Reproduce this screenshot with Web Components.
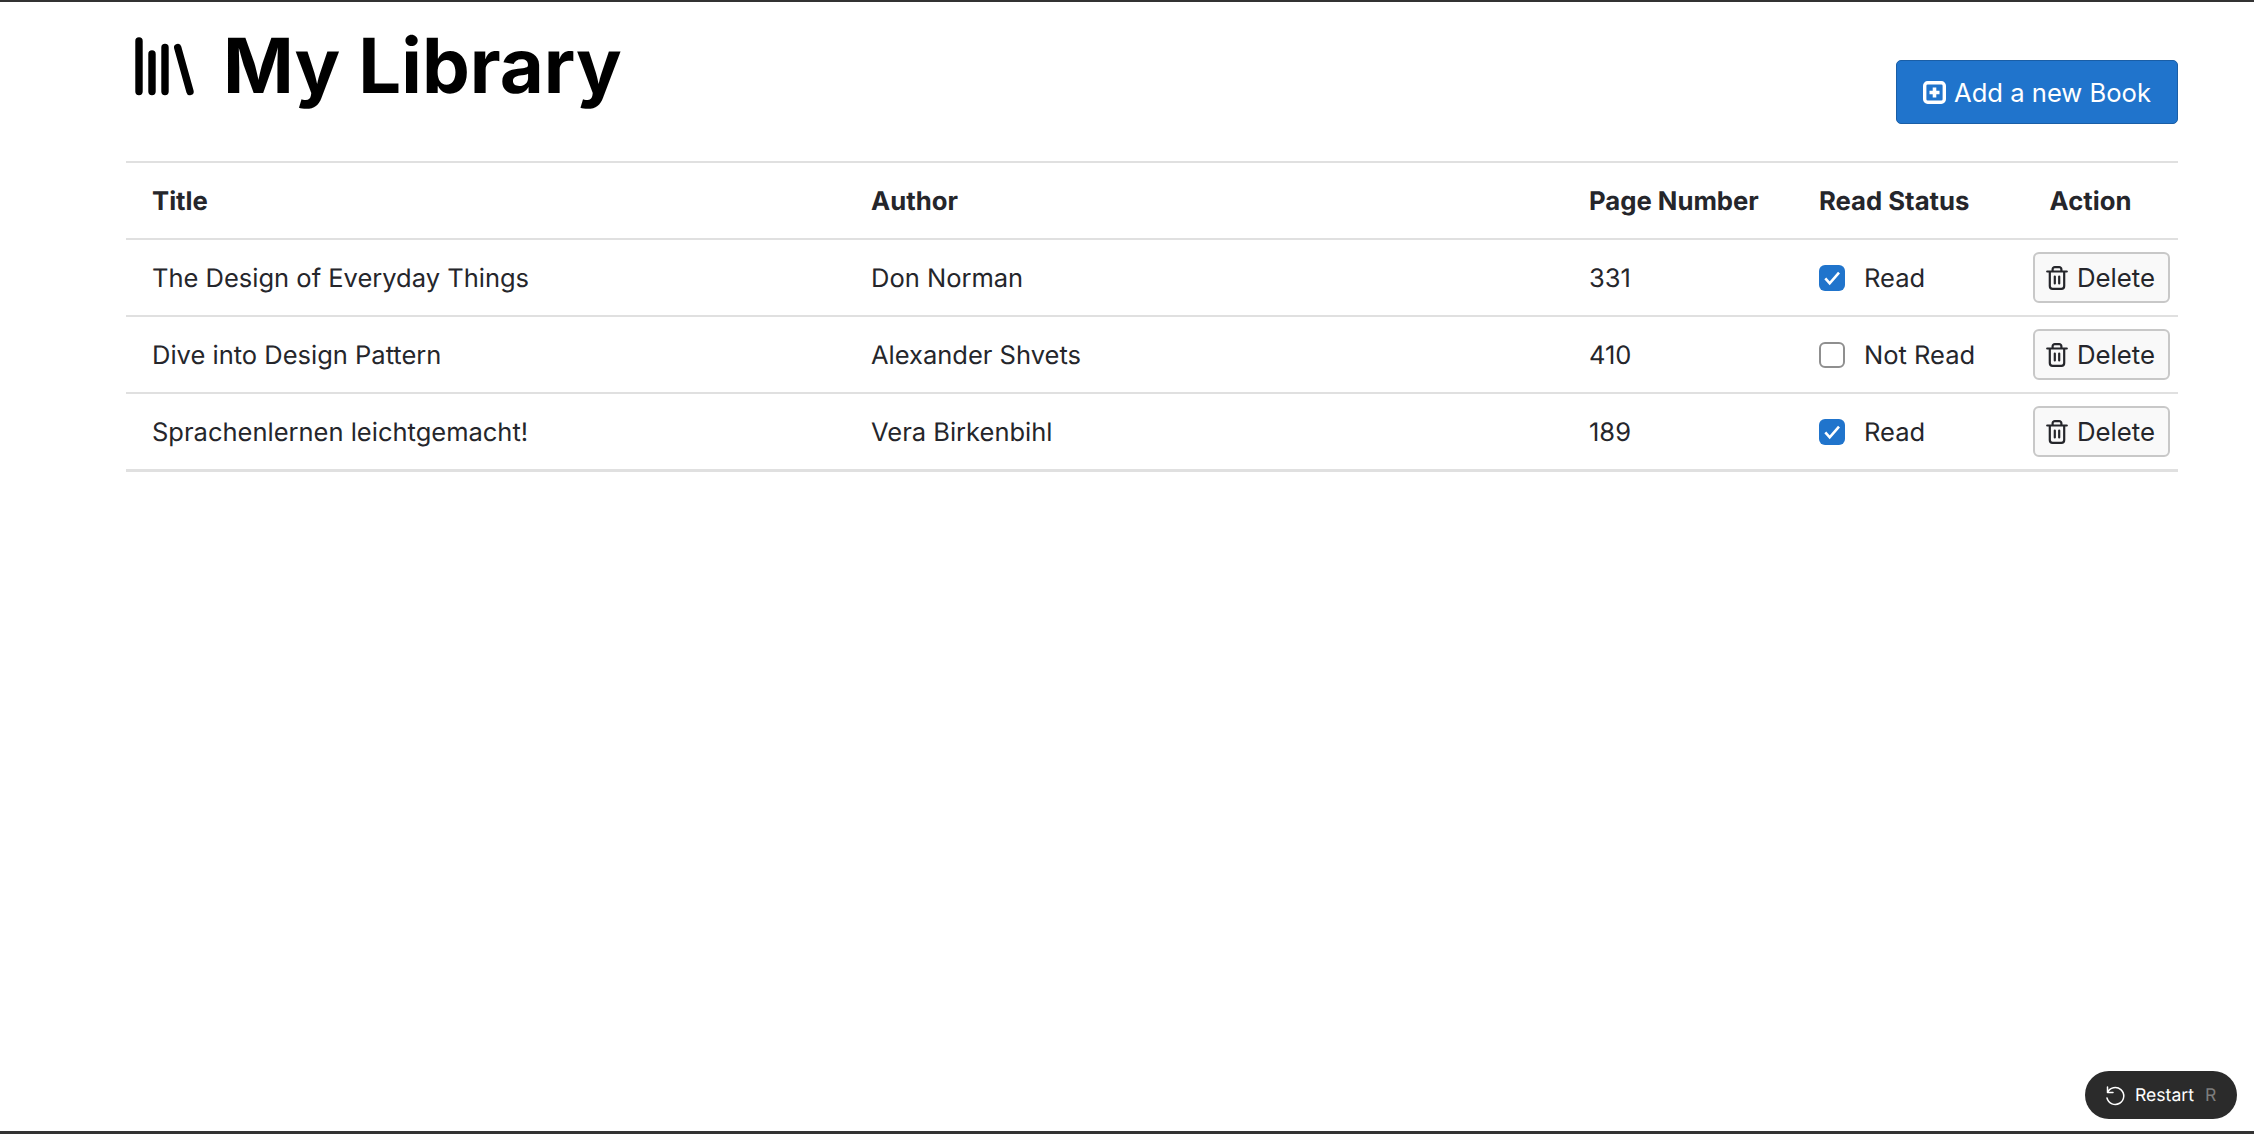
<!DOCTYPE html>
<html lang="en"><head><meta charset="utf-8"><title>My Library</title>
<style>
html,body{margin:0;height:100%;background:#fff}
body{font-family:Inter,"Liberation Sans",sans-serif;color:#25262b;text-rendering:geometricPrecision}
</style></head><body>
<library-app>
  <library-header slot="header"></library-header>
  <book-table>
    <book-row title-text="The Design of Everyday Things" author="Don Norman" pages="331" read></book-row>
    <book-row title-text="Dive into Design Pattern" author="Alexander Shvets" pages="410"></book-row>
    <book-row title-text="Sprachenlernen leichtgemacht!" author="Vera Birkenbihl" pages="189" read></book-row>
  </book-table>
  <restart-pill></restart-pill>
</library-app>
<script>
function def(name, html){
  customElements.define(name, class extends HTMLElement{
    constructor(){super();this.attachShadow({mode:'open'});}
    connectedCallback(){
      this.shadowRoot.innerHTML = typeof html==='function'?html(this):html;
    }
  });
}
def('library-app',`<style>
:host{display:block;box-sizing:border-box;height:1134px;position:relative;border-top:2px solid #333;border-bottom:3px solid #333;padding:0 76px 0 126px;overflow:hidden}
</style><slot name="header"></slot><slot></slot>`);
def('library-header',`<style>
:host{display:flex;justify-content:space-between;align-items:flex-start;height:159px;box-sizing:border-box}
h1{margin:0;display:flex;align-items:flex-start;gap:28px;font:700 76px/96px Inter,sans-serif;color:#000;padding:16px 0 0 9px;letter-spacing:0}
h1 svg{display:block;width:60px;height:60px;flex:none;margin-top:19px}
button{margin-top:58px;height:64px;width:282px;box-sizing:border-box;display:flex;align-items:center;justify-content:center;gap:8px;background:#2074cc;color:#fff;border:1px solid #1a5ea6;border-radius:5px;font:400 25.6px Inter,sans-serif;padding:0}
button svg{width:23px;height:23px}
</style>
<h1><svg viewBox="0 0 60 60" fill="none" stroke="#000" stroke-width="7.4" stroke-linecap="round"><path d="M4 4V54.5M17 17V54.5M30 10.5V54.5M42.7 10.5L55 54.5"/></svg>My Library</h1>
<button><svg viewBox="0 0 23 23"><rect x="1.7" y="1.7" width="19.6" height="19.6" rx="3" fill="none" stroke="#fff" stroke-width="3.4"/><path d="M11.5 6.5V16.5M6.5 11.5H16.5" stroke="#fff" stroke-width="3.6"/></svg>Add a new Book</button>`);
const COLS='grid-template-columns:719px 718px 230px 214px 171px';
def('book-table',`<style>
:host{display:block;border-top:2px solid #e0e0e0;border-bottom:3px solid #e0e0e0}
.head{display:grid;${COLS};height:75px;align-items:center;font:700 25.7px Inter,sans-serif;color:#25262b;border-bottom:2px solid #e0e0e0}
.head>div{padding-left:26px;padding-top:1px;white-space:nowrap}
.head>div:nth-child(5){padding-left:0;text-align:center;padding-right:4px}
</style>
<div class="head"><div>Title</div><div>Author</div><div>Page Number</div><div>Read Status</div><div>Action</div></div>
<slot></slot>`);
def('book-row',e=>{
  const read=e.hasAttribute('read');
  return `<style>
:host{display:grid;${COLS};height:75px;align-items:center;font:380 25.5px Inter,sans-serif;color:#25262b;border-bottom:2px solid #e0e0e0}
:host(:last-child){border-bottom:0}
.c{padding-left:26px;white-space:nowrap;padding-top:1px}
.status{display:flex;align-items:center;gap:19px;padding-top:0}
.status span:last-child{padding-top:1px}
.box{width:26px;height:26px;box-sizing:border-box;border-radius:6px;display:block;flex:none}
.on{background:#2074cc}
.off{border:2px solid #8f8f8f;background:#fff}
.del{justify-self:end;width:137px;height:51px;box-sizing:border-box;margin-right:8px;display:flex;align-items:center;justify-content:center;gap:9px;padding:0;background:#f9f9f9;border:2px solid #c8c8c8;border-radius:6px;font:430 25.8px Inter,sans-serif;color:#25262b}
.del svg{width:22px;height:24px;margin-left:-2px}
</style>
<div class="c">${e.getAttribute('title-text')}</div><div class="c">${e.getAttribute('author')}</div><div class="c">${e.getAttribute('pages')}</div>
<div class="c status">${read?`<svg class="box on" viewBox="0 0 26 26"><path d="M6.3 13.3l4.4 5 9.3-10.6" fill="none" stroke="#fff" stroke-width="2.6"/></svg>`:`<span class="box off"></span>`}<span>${read?'Read':'Not Read'}</span></div>
<button class="del"><svg viewBox="0 0 22 24" fill="none" stroke="#25262b" stroke-width="2.2" stroke-linecap="round" stroke-linejoin="round"><path d="M1.2 5.5H20.8M3.8 5.5V20A2.8 2.8 0 0 0 6.6 22.8H15.4A2.8 2.8 0 0 0 18.2 20V5.5M6.6 5.5V3.4A2.2 2.2 0 0 1 8.8 1.2H13.2A2.2 2.2 0 0 1 15.4 3.4V5.5M8.8 10.5V17.5M13.2 10.5V17.5"/></svg>Delete</button>`;
});
def('restart-pill',`<style>
:host{position:absolute;right:17px;bottom:12px;width:152px;height:48px;border-radius:24px;background:#2b2b2b;color:#fff;display:flex;align-items:center;font:400 17.6px Inter,sans-serif;box-sizing:border-box;padding-left:18px}
svg{width:24px;height:24px;margin-right:8px;flex:none}
.k{color:#7d7d7d;margin-left:11px}
</style><svg viewBox="0 0 24 24" fill="none" stroke="#fff" stroke-width="1.5" stroke-linecap="round" stroke-linejoin="round"><path d="M4.5 4V9.5H10M4.5 9.5A8.5 8.5 0 1 1 4 15"/></svg><span>Restart</span><span class="k">R</span>`);
</script>
</body></html>
